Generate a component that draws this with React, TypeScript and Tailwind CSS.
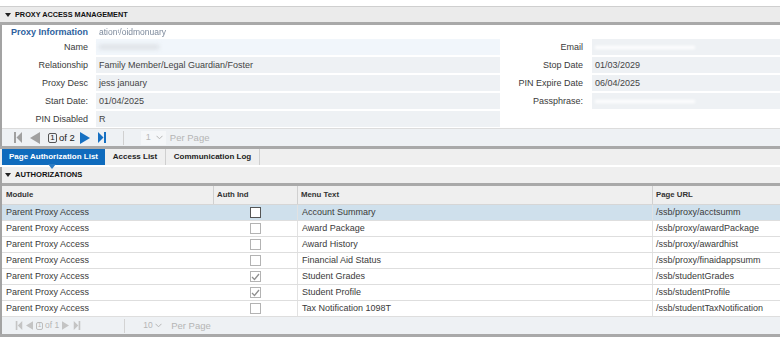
import React from "react";

function FirstIcon({ color, h = 11 }: { color: string; h?: number }) {
  return (
    <svg width={8} height={h} viewBox="0 0 8 11">
      <rect x="0" y="0" width="2" height="11" fill={color} />
      <polygon points="8,0 2.5,5.5 8,11" fill={color} />
    </svg>
  );
}
function LastIcon({ color, h = 11 }: { color: string; h?: number }) {
  return (
    <svg width={8} height={h} viewBox="0 0 8 11">
      <polygon points="0,0 5.5,5.5 0,11" fill={color} />
      <rect x="6" y="0" width="2" height="11" fill={color} />
    </svg>
  );
}
function PrevIcon({ color, w = 10, h = 12 }: { color: string; w?: number; h?: number }) {
  return (
    <svg width={w} height={h} viewBox="0 0 10 12">
      <polygon points="10,0 0,6 10,12" fill={color} />
    </svg>
  );
}
function NextIcon({ color, w = 10, h = 12 }: { color: string; w?: number; h?: number }) {
  return (
    <svg width={w} height={h} viewBox="0 0 10 12">
      <polygon points="0,0 10,6 0,12" fill={color} />
    </svg>
  );
}
function Caret() {
  return (
    <svg width={6} height={4} viewBox="0 0 6 4">
      <polygon points="0,0 6,0 3,4" fill="#222" />
    </svg>
  );
}
function Chevron() {
  return (
    <svg width={7} height={5} viewBox="0 0 7 5">
      <polyline points="0.5,0.8 3.5,3.8 6.5,0.8" fill="none" stroke="#b5b5b5" strokeWidth="1" />
    </svg>
  );
}

function Checkbox({ checked, dark }: { checked?: boolean; dark?: boolean }) {
  return (
    <div
      className={
        dark
          ? "w-[11px] h-[11px] border border-[#555] bg-white flex items-center justify-center"
          : "w-[11px] h-[11px] border border-[#b3b3b3] bg-white flex items-center justify-center"
      }
    >
      {checked && (
        <svg width={9} height={8} viewBox="0 0 9 8">
          <polyline points="1,4 3.5,6.5 8,1" fill="none" stroke="#8f8f8f" strokeWidth="1.3" />
        </svg>
      )}
    </div>
  );
}

const leftRows = [
  { label: "Name", value: "", blur: true, light: true },
  { label: "Relationship", value: "Family Member/Legal Guardian/Foster" },
  { label: "Proxy Desc", value: "jess january" },
  { label: "Start Date:", value: "01/04/2025" },
  { label: "PIN Disabled", value: "R" },
];
const rightRows = [
  { label: "Email", value: "", blur: true },
  { label: "Stop Date", value: "01/03/2029" },
  { label: "PIN Expire Date", value: "06/04/2025" },
  { label: "Passphrase:", value: "", blur: true },
];

const rows = [
  { menu: "Account Summary", url: "/ssb/proxy/acctsumm", checked: false, sel: true },
  { menu: "Award Package", url: "/ssb/proxy/awardPackage", checked: false },
  { menu: "Award History", url: "/ssb/proxy/awardhist", checked: false },
  { menu: "Financial Aid Status", url: "/ssb/proxy/finaidappsumm", checked: false },
  { menu: "Student Grades", url: "/ssb/studentGrades", checked: true },
  { menu: "Student Profile", url: "/ssb/studentProfile", checked: true },
  { menu: "Tax Notification 1098T", url: "/ssb/studentTaxNotification", checked: false },
];

export default function App() {
  return (
    <div className="w-[780px] h-[338px] bg-white overflow-hidden font-['Liberation_Sans',Arial,sans-serif] text-[9px] leading-none text-[#3a3a3a]">
      <div className="h-[6px]" />
      {/* Header */}
      <div className="h-[16px] bg-[#ebebeb] border-t border-[#cfcfcf] flex items-center pl-[5px] gap-[4px]">
        <Caret />
        <span className="font-bold text-[7.3px] text-[#111]">PROXY ACCESS MANAGEMENT</span>
      </div>
      <div className="h-[3px] bg-[#a9a9a9]" />

      {/* Proxy panel */}
      <div className="border-l-2 border-[#a3a3a3]">
        <div className="h-[14px] flex items-center pl-[9px] gap-[11px]">
          <span className="font-bold text-[#2d5f9e] text-[9px]">Proxy Information</span>
          <span className="text-[#7d8a9c] text-[8.5px] blur-[0.5px]">ationᵗ/oidmonuary</span>
        </div>
        <div className="flex pb-[1px]">
          <div className="w-[498px] flex flex-col gap-[2px]">
            {leftRows.map((r) => (
              <div key={r.label} className="flex h-[16px] items-center">
                <div className="w-[86px] text-right">{r.label}</div>
                <div
                  className={
                    r.light
                      ? "ml-[8px] flex-1 h-full bg-[#f1f6fb] pl-[3px] flex items-center"
                      : "ml-[8px] flex-1 h-full bg-[#eef1f4] pl-[3px] flex items-center text-[#444]"
                  }
                >
                  {r.blur ? <span className="inline-block w-[60px] h-[4px] bg-[#d9dde2] blur-[2px]" /> : r.value}
                </div>
              </div>
            ))}
          </div>
          <div className="flex-1 flex flex-col gap-[2px]">
            {rightRows.map((r) => (
              <div key={r.label} className="flex h-[16px] items-center">
                <div className="w-[83px] text-right">{r.label}</div>
                <div className="ml-[9px] flex-1 h-full bg-[#eef1f4] pl-[3px] flex items-center text-[#444]">
                  {r.blur ? <span className="inline-block w-[100px] h-[3px] bg-white blur-[1.5px]" /> : r.value}
                </div>
              </div>
            ))}
          </div>
        </div>
        {/* Pager top */}
        <div className="h-[18px] border-t border-[#dcdcdc] bg-[#eef1f4] flex items-center pl-[12px]">
          <FirstIcon color="#a0a0a0" />
          <div className="ml-[8px]"><PrevIcon color="#a0a0a0" /></div>
          <div className="ml-[8px] w-[9px] h-[10px] border border-[#555] rounded-[2px] text-[8px] flex items-center justify-center text-[#222]">1</div>
          <span className="ml-[2px] text-[#222] text-[9.5px]">of 2</span>
          <div className="ml-[5px]"><NextIcon color="#1670c2" /></div>
          <div className="ml-[8px]"><LastIcon color="#1670c2" /></div>
          <div className="ml-[17px] w-px h-[14px] bg-[#d0d0d0]" />
          <div className="ml-[17px] w-[25px] h-[14px] bg-[#f5f7f9] flex items-center pl-[5px] gap-[5px] text-[#b8b8b8]">
            <span>1</span>
            <Chevron />
          </div>
          <span className="ml-[4px] text-[#b5b5b5] text-[9.5px]">Per Page</span>
        </div>
      </div>
      <div className="h-[3px] bg-[#a9a9a9]" />

      {/* Tabs */}
      <div className="h-[16px] bg-[#efefef] flex items-stretch pl-[2px]">
        <div className="relative w-[103px] bg-[#0f6bbd] text-white font-bold text-[8px] flex items-center justify-center">
          Page Authorization List
          <svg className="absolute left-[46px] top-[15px]" width={8} height={5} viewBox="0 0 8 5">
            <polygon points="0,0 8,0 4,5" fill="#2b7cc4" />
          </svg>
        </div>
        <div className="w-[61px] border-r border-[#cfcfcf] text-[#222] font-bold text-[8px] flex items-center justify-center">Access List</div>
        <div className="w-[94px] border-r border-[#cfcfcf] text-[#222] font-bold text-[8px] flex items-center justify-center">Communication Log</div>
      </div>
      <div className="h-[2px] bg-white" />

      {/* Authorizations */}
      <div className="border-l-2 border-[#a3a3a3]">
        <div className="h-[16px] bg-[#efefef] flex items-center pl-[3px] gap-[4px]">
          <Caret />
          <span className="font-bold text-[7.6px] text-[#111]">AUTHORIZATIONS</span>
        </div>
        <div className="h-[3px] bg-[#a9a9a9]" />
        <div className="h-[19px] bg-[#efefef] flex text-[7.8px] font-bold text-[#333] border-b border-[#d6d6d6]">
          <div className="w-[212px] border-r border-[#d0d0d0] flex items-center pl-[4px]">Module</div>
          <div className="w-[84px] border-r border-[#d0d0d0] flex items-center pl-[3px]">Auth Ind</div>
          <div className="w-[355px] border-r border-[#d0d0d0] flex items-center pl-[3px]">Menu Text</div>
          <div className="flex-1 flex items-center pl-[3px]">Page URL</div>
        </div>
        {rows.map((r, i) => (
          <div
            key={r.menu}
            className={
              r.sel
                ? "h-[16px] flex bg-[#cfe0ec] border-b border-[#dedede]"
                : "h-[16px] flex bg-white border-b border-[#dedede]"
            }
          >
            <div className="w-[212px] flex items-center pl-[4px]">Parent Proxy Access</div>
            <div className="w-[84px] border-r border-[#e2e2e2] flex items-center justify-center">
              <Checkbox checked={r.checked} dark={i === 0} />
            </div>
            <div className="w-[355px] border-r border-[#e2e2e2] flex items-center pl-[4px]">{r.menu}</div>
            <div className="flex-1 flex items-center pl-[3px]">{r.url}</div>
          </div>
        ))}
        {/* Pager bottom */}
        <div className="h-[17px] bg-[#eef1f4] flex items-center pl-[13px] text-[#b5b5b5]">
          <FirstIcon color="#c4c4c4" h={9} />
          <div className="ml-[3px]"><PrevIcon color="#c4c4c4" w={7} h={9} /></div>
          <div className="ml-[3px] w-[7px] h-[8px] border border-[#bdbdbd] rounded-[2px] text-[6.5px] flex items-center justify-center">1</div>
          <span className="ml-[2px] text-[8.5px]">of 1</span>
          <div className="ml-[3px]"><NextIcon color="#c4c4c4" w={7} h={9} /></div>
          <div className="ml-[4px]"><LastIcon color="#c4c4c4" h={9} /></div>
          <div className="ml-[43px] w-px h-[14px] bg-[#d3d3d3]" />
          <div className="ml-[18px] w-[19px] h-[13px] flex items-center gap-[2px]">
            <span className="text-[8.5px]">10</span>
            <Chevron />
          </div>
          <span className="ml-[9px] text-[9.5px]">Per Page</span>
        </div>
      </div>
      <div className="h-[3px] bg-[#a9a9a9]" />
    </div>
  );
}
